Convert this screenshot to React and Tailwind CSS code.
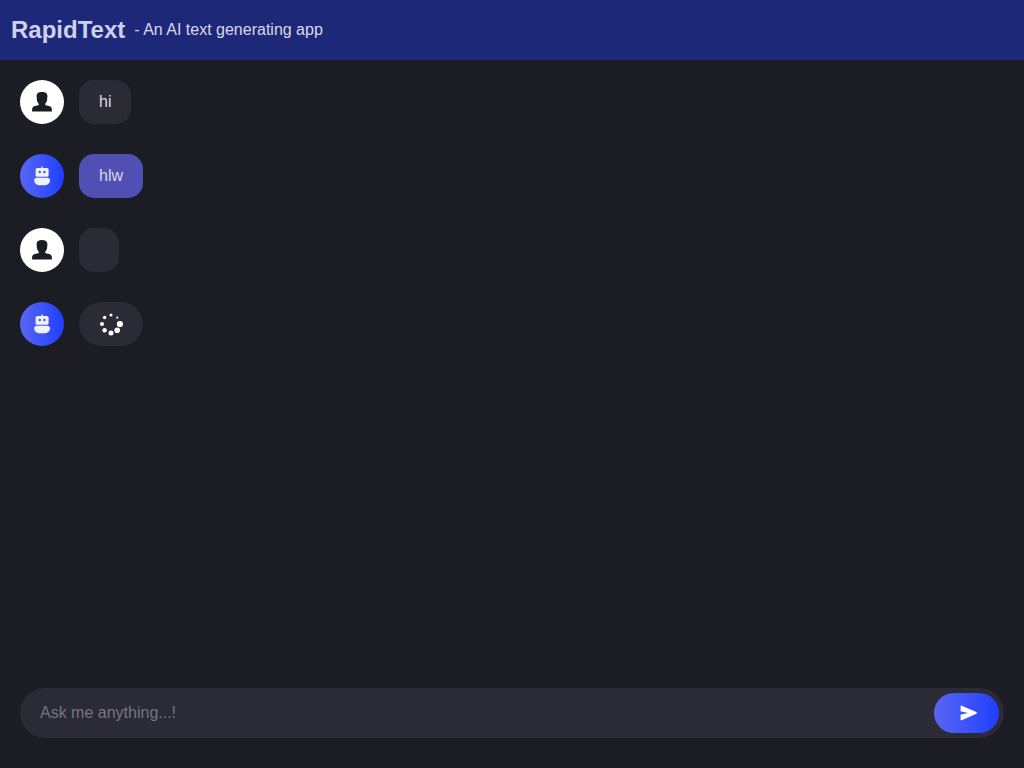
const DOTS = [
  [20.9, 12, 3.1],
  [18.2, 18.2, 2.8],
  [12, 20.9, 2.5],
  [5.6, 18.3, 2.2],
  [3, 12, 2],
  [5.6, 5.5, 1.7],
  [12, 3.1, 1.5],
  [18.3, 5.6, 1.1],
];

function Spinner() {
  return (
    <svg width="24" height="24" viewBox="0 0 24 24" fill="white">
      {DOTS.map(([cx, cy, r]) => (
        <circle key={`${cx}-${cy}`} cx={cx} cy={cy} r={r} />
      ))}
    </svg>
  );
}

function PersonIcon() {
  return (
    <svg width="20" height="20" viewBox="0 0 20 20" fill="currentColor">
      <path d="M10 .1C6.5 .1 4.5 1.4 4.6 4.4L4.9 7.8C5.1 9.6 5.8 10.8 6.8 11.7V12.6C6.8 13.2 5.8 13.4 4 13.8C1.2 14.4 .1 15.5 .1 17.6V19.5H19.9V17.6C19.9 15.5 18.8 14.4 16 13.8C14.2 13.4 13.2 13.2 13.2 12.6V11.7C14.2 10.8 14.9 9.6 15.1 7.8L15.4 4.4C15.5 1.4 13.5 .1 10 .1Z" />
    </svg>
  );
}

function RobotIcon() {
  return (
    <svg width="20" height="20" viewBox="0 0 20 20" fill="currentColor">
      <rect x="9.4" y=".4" width="1.3" height="2.2" />
      <path
        fillRule="evenodd"
        d="M5.3 2H14.9Q16.6 2 16.6 3.6V9.4Q16.6 10.7 15.2 10.7H5Q3.6 10.7 3.6 9.4V3.6Q3.6 2 5.3 2ZM7.8 4.8A1.2 1.2 0 1 0 7.8 7.2A1.2 1.2 0 1 0 7.8 4.8ZM12.4 4.8A1.2 1.2 0 1 0 12.4 7.2A1.2 1.2 0 1 0 12.4 4.8Z"
      />
      <path d="M5 11.7H15.2C17 11.7 18 12.7 18 14.2C18 17.4 15.3 19.2 12.3 19.2H7.9C4.9 19.2 2.2 17.4 2.2 14.2C2.2 12.7 3.2 11.7 5 11.7Z" />
    </svg>
  );
}

function SendIcon() {
  return (
    <svg width="20" height="20" viewBox="0 0 20 20" fill="currentColor">
      <path d="M2.6 3.3Q2.6 2.2 3.7 2.7L18.4 9.1Q19.7 10 18.4 10.8L3.7 17.2Q2.6 17.7 2.6 16.6V12.1Q2.6 11.6 3.2 11.5L10.2 10L3.2 8.5Q2.6 8.3 2.6 7.8Z" />
    </svg>
  );
}

function UserAvatar() {
  return (
    <div className="flex size-11 shrink-0 items-center justify-center rounded-full bg-white text-[#1c1c24]">
      <PersonIcon />
    </div>
  );
}

function BotAvatar() {
  return (
    <div className="flex size-11 shrink-0 items-center justify-center rounded-full bg-linear-to-r from-[#5865f2] to-[#203cff] text-[#f0f0ff]">
      <RobotIcon />
    </div>
  );
}

function Message({ bot, bubble, children }) {
  return (
    <div className="flex gap-[15px]">
      {bot ? <BotAvatar /> : <UserAvatar />}
      <div className={`flex h-11 items-center px-5 ${bubble}`}>{children}</div>
    </div>
  );
}

export default function App() {
  return (
    <div className="flex h-screen flex-col bg-[#1c1c24] font-['Liberation_Sans',Arial,sans-serif] text-base text-[#d9d9e9]">
      <header className="flex h-[60px] shrink-0 items-center bg-[#1e2878] pl-[11px]">
        <h1 className="text-2xl font-bold text-[#ced0ee]">RapidText</h1>
        <p className="ml-[9px]">- An AI text generating app</p>
      </header>
      <main className="flex flex-1 flex-col gap-[30px] p-5">
        <Message bubble="rounded-[15px] bg-[#2b2b35]"><span className="-mt-px">hi</span></Message>
        <Message bot bubble="rounded-[15px] bg-[#504fb4]"><span className="-mt-px">hlw</span></Message>
        <Message bubble="rounded-[15px] bg-[#2b2b35]" />
        <Message bot bubble="rounded-full bg-[#2b2b35]"><Spinner /></Message>
      </main>
      <form className="mx-5 mb-[30px] flex h-[50px] shrink-0 items-center rounded-full bg-[#2b2b35] pr-[5px] pl-5">
        <input
          type="text"
          placeholder="Ask me anything...!"
          className="min-w-0 flex-1 bg-transparent outline-none placeholder:text-[#757580]"
        />
        <button
          type="button"
          className="flex h-10 w-[65px] items-center justify-center rounded-full bg-linear-to-r from-[#5865f2] to-[#203cff] pl-[3px] text-white"
        >
          <SendIcon />
        </button>
      </form>
    </div>
  );
}
